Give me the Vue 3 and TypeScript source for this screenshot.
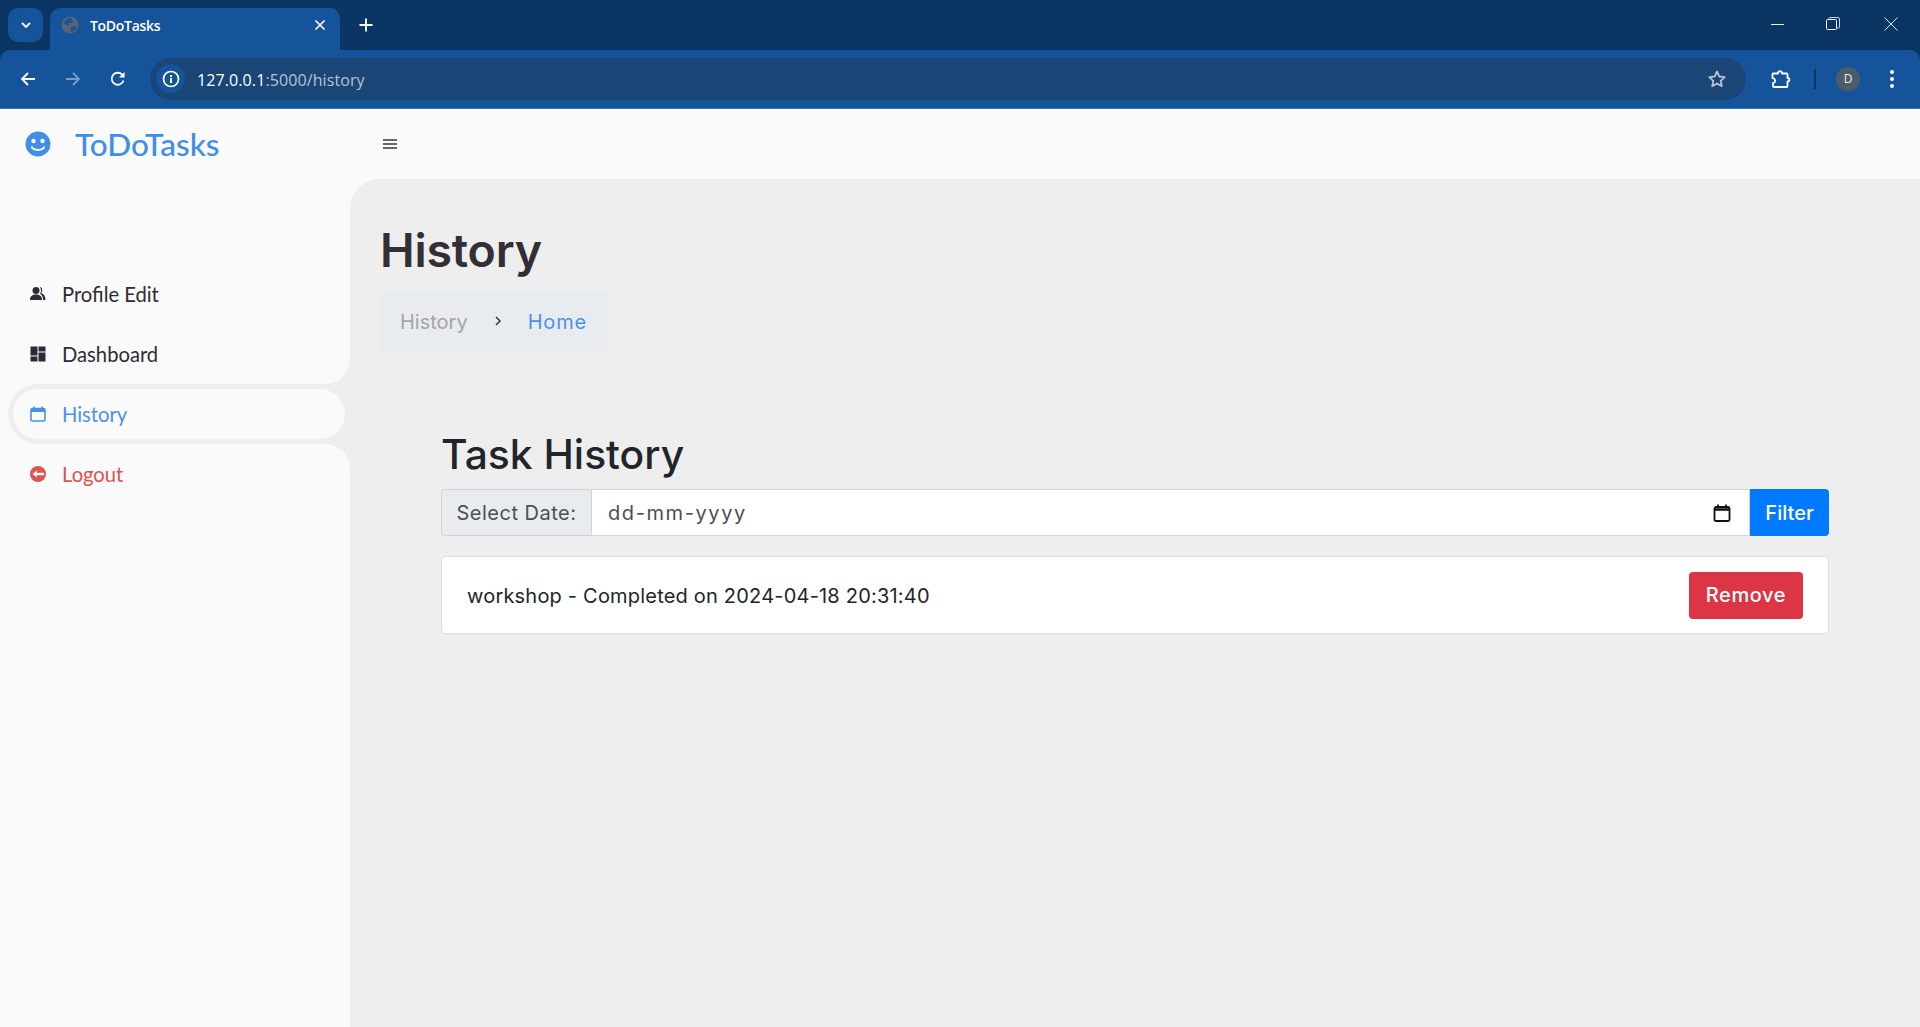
<script setup lang="ts">
interface NavItem { label: string; kind: string; tone: string }
const items: NavItem[] = [
  { label: 'Profile Edit', kind: 'people', tone: 'dark' },
  { label: 'Dashboard', kind: 'grid', tone: 'dark' },
  { label: 'History', kind: 'cal', tone: 'active' },
  { label: 'Logout', kind: 'logout', tone: 'red' },
]
</script>

<template>
  <div class="window">
    <header class="chrome">
      <div class="tabstrip">
        <button class="tabsearch" aria-label="Search tabs">
          <svg width="12" height="12" viewBox="0 0 12 12"><path d="M2 4l4 4 4-4" fill="none" stroke="#fff" stroke-width="1.8"/></svg>
        </button>
        <div class="tab">
          <svg class="globe" width="18" height="18" viewBox="0 0 18 18">
            <circle cx="9" cy="9" r="8.5" fill="#5a6470"/>
            <path d="M9 1.5c2 1.5 3.5 3 2.5 4.5S8 6.500 7.500 8.500 5 9 3 7.500C3.500 4.500 6 2 9 1.500zM10 11c2-1 4-1 5.500 0-.5 2.500-3 4.500-5 5-1-1.500-1.500-3.500-.5-5z" fill="#15539a"/>
          </svg>
          <span class="tabtitle">ToDoTasks</span>
          <svg class="tabclose" width="12" height="12" viewBox="0 0 12 12"><path d="M1.500 1.500l9 9m0-9l-9 9" stroke="#fff" stroke-width="1.700"/></svg>
        </div>
        <svg class="newtab" width="14" height="14" viewBox="0 0 14 14"><path d="M7 .5v13M.5 7h13" stroke="#fff" stroke-width="1.800"/></svg>
        <div class="winctl">
          <svg width="14" height="14" viewBox="0 0 14 14"><path d="M0 7.500h13" stroke="#e6ebf2" stroke-width="1"/></svg>
          <svg class="restore" width="14" height="14" viewBox="0 0 14 14" fill="none"><rect x=".5" y="2.500" width="10" height="10" rx="1" stroke="#fff"/><path d="M3 2.500V1.500a1 1 0 0 1 1-1h8a1.500 1.500 0 0 1 1.500 1.500v8a1 1 0 0 1-1 1h-2" stroke="#c8d2de"/></svg>
          <svg class="close" width="14" height="14" viewBox="0 0 14 14"><path d="M.5.500l13 13m0-13l-13 13" stroke="#dfe5ed" stroke-width="1"/></svg>
        </div>
      </div>
      <div class="toolbar">
        <svg class="tool" width="16" height="16" viewBox="0 0 16 16" fill="none"><path d="M15 8H2M8 2L2 8l6 6" stroke="#fff" stroke-width="1.800"/></svg>
        <svg class="tool" width="16" height="16" viewBox="0 0 16 16" fill="none"><path d="M1 8h13M8 2l6 6-6 6" stroke="#7d9dc6" stroke-width="1.800"/></svg>
        <svg class="tool" width="16" height="16" viewBox="0 0 16 16" fill="none"><path d="M13.500 9.500A6 6 0 1 1 12 3.500L14 5.500" stroke="#fff" stroke-width="1.800"/><path d="M14.500 1v5.500H9z" fill="#fff"/></svg>
        <div class="omnibox">
          <span class="infochip">
            <svg width="18" height="18" viewBox="0 0 18 18" fill="none"><circle cx="9" cy="9" r="7.500" stroke="#fff" stroke-width="1.700"/><rect x="8" y="8" width="2" height="5" fill="#fff"/><rect x="8" y="5" width="2" height="2" fill="#fff"/></svg>
          </span>
          <span class="url"><span class="host">127.0.0.1</span><span class="path">:5000/history</span></span>
          <svg class="star" width="20" height="20" viewBox="0 0 20 20" fill="none"><path d="M10 2.500l2.300 5 5.400.6-4 3.700 1.100 5.400L10 14.500l-4.800 2.700 1.100-5.400-4-3.700 5.400-.6z" stroke="#b9c2cd" stroke-width="1.800" stroke-linejoin="round"/></svg>
        </div>
        <svg class="ext" width="22" height="22" viewBox="0 0 22 22" fill="none"><path d="M3 5.500h5c-.5-3 4.500-3 4 0h4.500a1 1 0 0 1 1 1V10c2.500-.5 2.500 4 0 3.500v4.500a1 1 0 0 1-1 1H4a1 1 0 0 1-1-1v-3c2-.5 2.500-1.500 2-3s-1.500-2-2.500-2L2.500 6z" stroke="#fff" stroke-width="1.800" stroke-linejoin="round"/></svg>
        <span class="divider"></span>
        <span class="avatar">D</span>
        <span class="kebab"><i></i><i></i><i></i></span>
      </div>
    </header>

    <div class="page">
      <aside class="sidebar">
        <div class="brand">
          <svg width="26" height="26" viewBox="0 0 26 26"><circle cx="13" cy="13" r="12.500" fill="#3f8fe8"/><circle cx="8.500" cy="10" r="2.200" fill="#fafafa"/><circle cx="17.500" cy="10" r="2.200" fill="#fafafa"/><path d="M6.500 15.500c1.500 4.500 11.500 4.500 13 0" fill="none" stroke="#fafafa" stroke-width="2"/></svg>
          <span class="brandname">ToDoTasks</span>
        </div>
        <nav class="nav">
          <div v-for="item in items" :key="item.label" class="navrow" :class="item.tone">
            <a class="navlink" :class="item.label === 'Dashboard' ? 'before-active' : item.label === 'Logout' ? 'after-active' : ''">
              <svg v-if="item.kind === 'people'" class="navicon" width="16" height="16" viewBox="0 0 16 16"><circle cx="6" cy="4.500" r="3.500" fill="currentColor"/><path d="M0 14c0-4 2.500-5.500 6-5.500s6 1.500 6 5.500z" fill="currentColor"/><path d="M9.500 1c3 0 3.500 4 1.500 6 3 1 4.500 3.500 4.500 7H13c0-3-1-5-3-6.500 1.500-2 1.500-4.500-.5-6.500z" fill="currentColor"/></svg>
              <svg v-else-if="item.kind === 'grid'" class="navicon" width="16" height="16" viewBox="0 0 16 16"><rect x="0.500" y="0.500" width="7" height="9" fill="currentColor"/><rect x="8.500" y="0.500" width="7" height="5" fill="currentColor"/><rect x="0.500" y="10.500" width="7" height="5" fill="currentColor"/><rect x="8.500" y="6.500" width="7" height="9" fill="currentColor"/></svg>
              <svg v-else-if="item.kind === 'cal'" class="navicon" width="16" height="16" viewBox="0 0 16 16" fill="none"><rect x="1" y="2.500" width="14" height="12.500" rx="1.500" stroke="currentColor" stroke-width="1.600"/><path d="M1 4.500h14" stroke="currentColor" stroke-width="3"/><path d="M4 0.500v2.500M12 0.500v2.500" stroke="currentColor" stroke-width="1.600"/></svg>
              <svg v-else class="navicon" width="16" height="16" viewBox="0 0 16 16"><circle cx="8" cy="8" r="8" fill="currentColor"/><path d="M14 8H6" fill="none" stroke="#fafafa" stroke-width="2.400"/><path d="M2.500 8L7 4.500v7z" fill="#fafafa"/></svg>
              <span>{{ item.label }}</span>
            </a>
          </div>
        </nav>
      </aside>

      <div class="right">
        <div class="topbar">
          <svg width="14" height="10" viewBox="0 0 14 10"><path d="M0 1h14M0 5h14M0 9h14" stroke="#343a40" stroke-width="1.500"/></svg>
        </div>
        <main class="main">
          <h1 class="pagetitle">History</h1>
          <ol class="crumbs">
            <li class="crumb-muted">History</li>
            <li class="crumb-sep">
              <svg width="8" height="10" viewBox="0 0 8 10"><path d="M2 1l4 4-4 4" fill="none" stroke="#333" stroke-width="1.500"/></svg>
            </li>
            <li class="crumb-link">Home</li>
          </ol>
          <section class="content">
            <h2 class="tasktitle">Task History</h2>
            <form class="filter" @submit.prevent>
              <label class="addon" for="date">Select Date:</label>
              <div class="dateinput">
                <input id="date" class="datefield" type="text" placeholder="dd-mm-yyyy" />
                <svg width="18" height="18" viewBox="0 0 18 18" fill="none"><rect x="1.500" y="3" width="15" height="14" rx="1.500" stroke="#111" stroke-width="1.800"/><path d="M1.500 5.500h15" stroke="#111" stroke-width="2.500"/><path d="M5 .5V3M13 .5V3" stroke="#111" stroke-width="1.800"/></svg>
              </div>
              <button class="filterbtn" type="submit">Filter</button>
            </form>
            <div class="taskitem">
              <span class="tasktext">workshop - Completed on 2024-04-18 20:31:40</span>
              <button class="removebtn" type="button">Remove</button>
            </div>
          </section>
        </main>
      </div>
    </div>
  </div>
</template>

<style>
html, body { margin: 0; padding: 0; overflow: hidden; }
</style>

<style scoped>
.window { width: 100%; height: 100vh; display: flex; flex-direction: column; overflow: hidden; background: #fafafa; font-family: "Inter", "Liberation Sans", sans-serif; }
.chrome { flex: none; height: 109px; background: #0b3563; display: flex; flex-direction: column; }
.tabstrip { height: 50px; display: flex; align-items: flex-start; padding-left: 8px; box-sizing: border-box; }
.tabsearch { width: 35px; height: 34px; margin-top: 8px; border: 0; border-radius: 10px; background: #15539a; display: flex; align-items: center; justify-content: center; padding: 0; }
.tab { width: 290px; height: 42px; margin: 8px 0 0 7px; background: #15539a; border-radius: 10px 10px 0 0; display: flex; align-items: center; padding: 0 11px 8px; box-sizing: border-box; position: relative; }
.globe { flex: none; margin-right: 11px; }
.tabtitle { flex: 1; color: #fff; font: 600 14px "Open Sans", sans-serif; letter-spacing: -0.3px; }
.tabclose { flex: none; margin-right: 3px; }
.newtab { margin: 18px 0 0 19px; }
.winctl { margin-left: auto; display: flex; padding: 17px 22px 0 0; }
.winctl .restore { margin-left: 41px; }
.winctl .close { margin-left: 44px; }
.toolbar { height: 59px; box-sizing: border-box; background: #15539a; border-radius: 10px 10px 0 0; border-bottom: 1px solid #3a74b0; display: flex; align-items: center; padding: 0 0 1px 20px; }
.tool { flex: none; margin-right: 29px; }
.omnibox { width: 1596px; height: 42px; margin-left: -5px; background: #1a4677; border-radius: 21px; display: flex; align-items: center; padding: 0 19px 0 6px; box-sizing: border-box; }
.infochip { width: 29px; height: 29px; border-radius: 50%; background: #15539a; display: flex; align-items: center; justify-content: center; flex: none; }
.url { flex: 1; margin-left: 12px; font: 400 16px "Open Sans", sans-serif; letter-spacing: 0.1px; padding-top: 2px; }
.host { color: #fff; }
.path { color: #b6c3d3; }
.star { flex: none; }
.ext { flex: none; margin-left: 24px; }
.divider { width: 2px; height: 20px; background: #0b3563; margin: 0 20px 0 22px; flex: none; }
.avatar { width: 24px; height: 24px; border-radius: 50%; background: #4c5c68; color: #e8edf2; display: flex; align-items: center; justify-content: center; font: 400 12px "Open Sans", sans-serif; flex: none; }
.kebab { margin-left: 30px; display: flex; flex-direction: column; gap: 3px; flex: none; }
.kebab i { width: 4px; height: 4px; border-radius: 50%; background: #fff; display: block; }

.page { flex: 1; display: flex; min-height: 0; }
.sidebar { width: 350px; flex: none; background: #fafafa; font-family: "Lato", sans-serif; }
.brand { height: 70px; display: flex; align-items: center; padding-left: 25px; box-sizing: border-box; gap: 24px; }
.brandname { color: #3f8fe8; font-size: 31.5px; font-weight: 500; font-family: "Lato", sans-serif; }
.nav { margin-top: 85px; background: #fafafa; }
.navrow { height: 60px; box-sizing: border-box; }
.navrow.active { background: #eee; border-radius: 30px 0 0 30px; margin-left: 8px; padding: 5px; }
.navlink { height: 60px; display: flex; align-items: center; gap: 16px; padding-left: 30px; box-sizing: border-box; font-size: 20.2px; color: #2f2b36; background: #fafafa; }
.active .navlink { height: 50px; border-radius: 25px; color: #4a90f0; padding-left: 17px; }
.red .navlink { color: #e05252; }
.navlink.before-active { border-bottom-right-radius: 25px; }
.navlink.after-active { border-top-right-radius: 25px; }
.navrow:has(+ .active) { background: #eee; }
.navrow.active + .navrow { background: #eee; }
.navicon { flex: none; }

.right { flex: 1; min-width: 0; display: flex; flex-direction: column; background: #fafafa; }
.topbar { height: 70px; flex: none; display: flex; align-items: center; padding-left: 33px; box-sizing: border-box; }
.main { flex: 1; background: #eee; border-top-left-radius: 30px; padding: 43px 30px 0; box-sizing: border-box; }
.pagetitle { margin: 0; font-size: 46.5px; line-height: 56px; font-weight: 600; color: #342e36; letter-spacing: -0.2px; }
.crumbs { list-style: none; margin: 14px 0 0; padding: 0 20px; height: 59px; width: fit-content; background: #e9ecef; border-radius: 4px; display: flex; align-items: center; font-size: 20px; }
.crumb-muted { color: #a5a5a5; }
.crumb-sep { margin: 0 26px; display: flex; padding-bottom: 2px; }
.crumb-link { color: #4a90f0; letter-spacing: 0.8px; }
.content { margin: 79px 0 0 61px; width: 1388px; }
.tasktitle { margin: 0; font-size: 40.8px; line-height: 48px; font-weight: 500; color: #212529; }
.filter { display: flex; height: 47px; margin-top: 11px; }
.addon { width: 151px; flex: none; box-sizing: border-box; background: #e9ecef; border: 1px solid #ced4da; border-radius: 4px 0 0 4px; display: flex; align-items: center; justify-content: center; color: #495057; font-size: 20px; letter-spacing: 0.5px; }
.dateinput { flex: 1; background: #fff; border: 1px solid #ced4da; border-left: 0; display: flex; align-items: center; padding: 0 18px 0 16px; box-sizing: border-box; }
.datefield { flex: 1; border: 0; outline: 0; padding: 0; background: transparent; font: 400 20px "Inter", sans-serif; letter-spacing: 1.6px; min-width: 0; }
.datefield::placeholder { color: #495057; opacity: 1; }
.filterbtn { width: 79px; flex: none; border: 0; background: #007bff; color: #fff; border-radius: 0 4px 4px 0; font: 500 20px "Inter", sans-serif; padding: 0; }
.taskitem { margin-top: 20px; height: 78px; box-sizing: border-box; background: #fff; border: 1px solid #dfdfdf; border-radius: 4px; display: flex; align-items: center; justify-content: space-between; padding: 0 25px; }
.tasktext { font-size: 20px; color: #212529; letter-spacing: 0.2px; padding-top: 1px; }
.removebtn { width: 114px; height: 47px; border: 0; border-radius: 4px; background: #dc3545; color: #fff; font: 500 20px "Inter", sans-serif; letter-spacing: 0.6px; padding: 0; }
</style>
